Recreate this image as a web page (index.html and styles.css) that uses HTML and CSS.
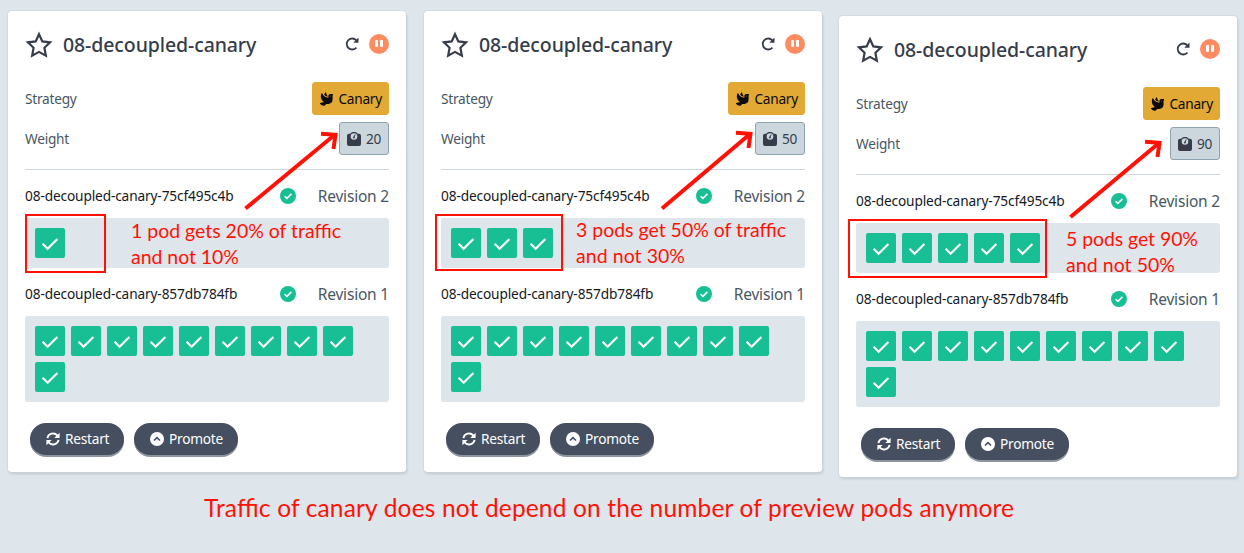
FILE: index.html
```html
<!DOCTYPE html>
<html lang="en">
<head>
<meta charset="utf-8">
<title>Rollouts</title>
<link rel="stylesheet" href="styles.css">
</head>
<body>
<svg class="defs" aria-hidden="true">
  <symbol id="star" viewBox="0 0 28 28"><path d="M14 3.2l3.35 7.2 7.75 1-5.7 5.4 1.45 7.8L14 20.9l-6.85 3.7 1.45-7.8-5.7-5.4 7.75-1z" fill="none" stroke="currentColor" stroke-width="2.2"/></symbol>
  <symbol id="redo" viewBox="0 0 14 14"><path d="M11.400 10.600A5.500 5.500 0 1 1 11.300 3.300" fill="none" stroke="currentColor" stroke-width="1.8"/><path d="M13.500.5v5.200H8.300z" fill="currentColor"/></symbol>
  <symbol id="dove" viewBox="0 0 512 512"><path fill="currentColor" d="M288 167.2v-28.1c-28.2-36.3-47.1-79.3-54.1-125.2-2.1-13.5-19-18.8-27.8-8.3-21.1 24.9-37.7 54.1-48.9 86.5 34.2 38.3 80 64.6 130.8 75.1zM400 64c-44.2 0-80 35.9-80 80.1v59.4C215.6 197.3 127 133 87 41.8c-5.5-12.5-23.2-13.2-29-.9C41.4 76 32 115.2 32 156.6c0 70.8 34.1 136.9 85.1 185.9 13.2 12.7 26.1 23.2 38.9 32.8l-143.9 36C1.4 414-3.4 426.4 2.6 435.7 20 462.6 63 508.2 155.8 512c8 .3 16-2.6 22.1-7.9l65.2-56.1H320c88.4 0 160-71.5 160-159.9V128l32-64H400zm0 96.1c-8.8 0-16-7.2-16-16s7.2-16 16-16 16 7.2 16 16-7.2 16-16 16z"/></symbol>
  <symbol id="weight" viewBox="0 0 14 14"><path fill="currentColor" d="M2 1.800h1.200A4.600 4.600 0 0 1 10.800 1.800H12a2 2 0 0 1 2 2V12a2 2 0 0 1-2 2H2a2 2 0 0 1-2-2V3.800a2 2 0 0 1 2-2z"/><circle cx="7" cy="4.500" r="3.300" fill="#ccd6dd"/><path d="M7 5.400L8.200 2.500" stroke="currentColor" stroke-width="1"/><circle cx="6.900" cy="5.500" r=".9" fill="currentColor"/></symbol>
  <symbol id="ok" viewBox="0 0 16 16"><circle cx="8" cy="8" r="8" fill="#18be94"/><path d="M4.6 8.2l2.3 2.2 4.500-4.500" fill="none" stroke="#fff" stroke-width="1.5"/></symbol>
  <symbol id="check" viewBox="0 0 30 30"><path d="M7.600 15.800l5 5 9.800-9.700" fill="none" stroke="#fff" stroke-width="2.100"/></symbol>
  <symbol id="sync" viewBox="0 0 14 14"><path d="M1.4 6.2A5.7 5.7 0 0 1 11.4 3.6M12.6 7.8A5.7 5.7 0 0 1 2.6 10.4" fill="none" stroke="currentColor" stroke-width="1.8"/><path d="M13.6.8v5.3H8.3zM.4 13.2V7.9h5.3z" fill="currentColor"/></symbol>
  <symbol id="up" viewBox="0 0 14 14"><circle cx="7" cy="7" r="7" fill="#fff"/><path d="M4 8.5l3-2.9 3 2.9" fill="none" stroke="#454f5f" stroke-width="1.6"/></symbol>
</svg>
<main class="board"></main>
<svg class="notes" viewBox="0 0 1244 553">
  <g class="frames">
    <rect x="26" y="215" width="79" height="57"/>
    <rect x="436" y="215" width="126" height="55"/>
    <rect x="849" y="220" width="197" height="57"/>
  </g>
  <g class="arrows">
    <path d="M245.500 208.500L335 134.500M321 133.800L335.500 134.800 333.500 149"/>
    <path d="M662 208.500L750 134M736 132.800L750.500 133.800 748.500 148"/>
    <path d="M1070.500 217L1159 143M1145 141.800L1159.500 142.800 1157.500 157"/>
  </g>
  <g class="note">
    <text x="131" y="238" textLength="210">1 pod gets 20% of traffic</text>
    <text x="131" y="264" textLength="108">and not 10%</text>
    <text x="576" y="237" textLength="210">3 pods get 50% of traffic</text>
    <text x="576" y="263" textLength="109">and not 30%</text>
    <text x="1066" y="246" textLength="132">5 pods get 90%</text>
    <text x="1066" y="272" textLength="109">and not 50%</text>
  </g>
  <text class="caption" x="204" y="517" textLength="810">Traffic of canary does not depend on the number of preview pods anymore</text>
</svg>
<script src="app.js"></script>
</body>
</html>
```
FILE: styles.css
```css
* { box-sizing: border-box; }
body {
  margin: 0;
  width: 1244px;
  height: 553px;
  overflow: hidden;
  position: relative;
  background: #dee5eb;
  color: #495763;
  font: 13.7px/20px "Noto Sans", "Open Sans", sans-serif;
  letter-spacing: -0.25px;
}
.defs { position: absolute; width: 0; height: 0; }
.board { display: grid; grid-template-columns: 398px 398px 398px; column-gap: 18px; padding: 11px 0 0 8px; align-items: start; }
.card { height: 461px; padding: 17px; background: #fff; border-radius: 4px; box-shadow: 0 0 0 1px #ccd6dd99, 1px 2px 3px #00000020; }
.card.shifted { margin: 5px 0 0 -1px; width: 398px; }
.header { display: flex; align-items: center; height: 34px; margin-bottom: 20px; color: #363c4a; }
.star { width: 28px; height: 28px; margin-right: 10px; }
.title { margin: 0; font-size: 19.5px; font-weight: 500; letter-spacing: -0.1px; }
.redo { width: 14px; height: 14px; margin: -3px 10px 0 auto; }
.pause { display: flex; justify-content: center; align-items: center; gap: 2px; width: 20px; height: 20px; margin-top: -3px; border-radius: 50%; background: #ff8b60; }
.pause i { width: 3px; height: 7px; border-radius: 1px; background: #fff; }
.row { display: flex; justify-content: space-between; align-items: center; height: 33px; margin-bottom: 7px; }
.tag { display: flex; align-items: center; gap: 5px; height: 33px; padding: 0 6px 0 7px; border: 1px solid #8fa4b1; border-radius: 3px; background: #ccd6dd; color: #363c4a; width: 50px; }
.tag svg { width: 14px; height: 14px; }
.tag.canary { width: 77px; border-color: #e2a934; background: #e2a934; color: #0a0a0f; }
.rule { height: 1px; margin: 14px 0 0; border: 0; background: #ccd6dd; }
.revision { display: flex; align-items: center; height: 26px; margin: 13px 0 9px; }
.name { width: 255px; color: #16191d; white-space: nowrap; letter-spacing: -0.14px; }
.revision svg { width: 16px; height: 16px; }
.number { margin-left: auto; font-size: 15.5px; letter-spacing: -0.2px; }
.pods { display: flex; flex-wrap: wrap; gap: 6px; padding: 10px; border-radius: 3px; background: #dee5eb; }
.pod { width: 30px; height: 30px; border-radius: 2px; background: #18be94; }
.pod svg { display: block; width: 30px; height: 30px; }
.actions { display: flex; gap: 10px; margin: 21px 0 0 5px; }
.button { display: flex; align-items: center; gap: 5px; height: 32px; padding: 0 16px; border: 0; border-radius: 16px; background: #454f5f; color: #fff; font: inherit; letter-spacing: inherit; box-shadow: 0 2px 0 #8f959e; }
.button svg { flex: none; width: 14px; height: 14px; }
.restart { width: 94px; padding-right: 0; }
.promote { width: 104px; padding-right: 0; }
.notes { position: absolute; left: 0; top: 0; width: 1244px; height: 553px; }
.frames rect { fill: none; stroke: #ff1205; stroke-width: 2; }
.arrows path { fill: none; stroke: #ff1205; stroke-width: 4; }
.notes text { fill: #ff1205; font-family: Lato, "Open Sans", sans-serif; letter-spacing: 0; }
.note { font-size: 19.500px; }
.caption { font-size: 24.500px; }
```
FILE: app.js
```js
const icon = (id, cls = '') => `<svg class="${cls}"><use href="#${id}"/></svg>`;
const revision = (hash, number, count) => `
  <div class="revision"><span class="name">08-decoupled-canary-${hash}</span>${icon('ok')}<span class="number">Revision ${number}</span></div>
  <div class="pods">${`<span class="pod">${icon('check')}</span>`.repeat(count)}</div>`;
const rollouts = [
  { weight: 20, pods: 1 },
  { weight: 50, pods: 3 },
  { weight: 90, pods: 5, cls: 'shifted' },
];
document.querySelector('.board').innerHTML = rollouts.map(r => `
  <section class="card ${r.cls || ''}">
    <div class="header">${icon('star', 'star')}<h2 class="title">08-decoupled-canary</h2>${icon('redo', 'redo')}<span class="pause"><i></i><i></i></span></div>
    <div class="row"><span>Strategy</span><span class="tag canary">${icon('dove')}Canary</span></div>
    <div class="row"><span>Weight</span><span class="tag">${icon('weight')}${r.weight}</span></div>
    <hr class="rule">
    ${revision('75cf495c4b', 2, r.pods)}
    ${revision('857db784fb', 1, 10)}
    <div class="actions"><button class="button restart">${icon('sync')}Restart</button><button class="button promote">${icon('up')}Promote</button></div>
  </section>`).join('');
```
